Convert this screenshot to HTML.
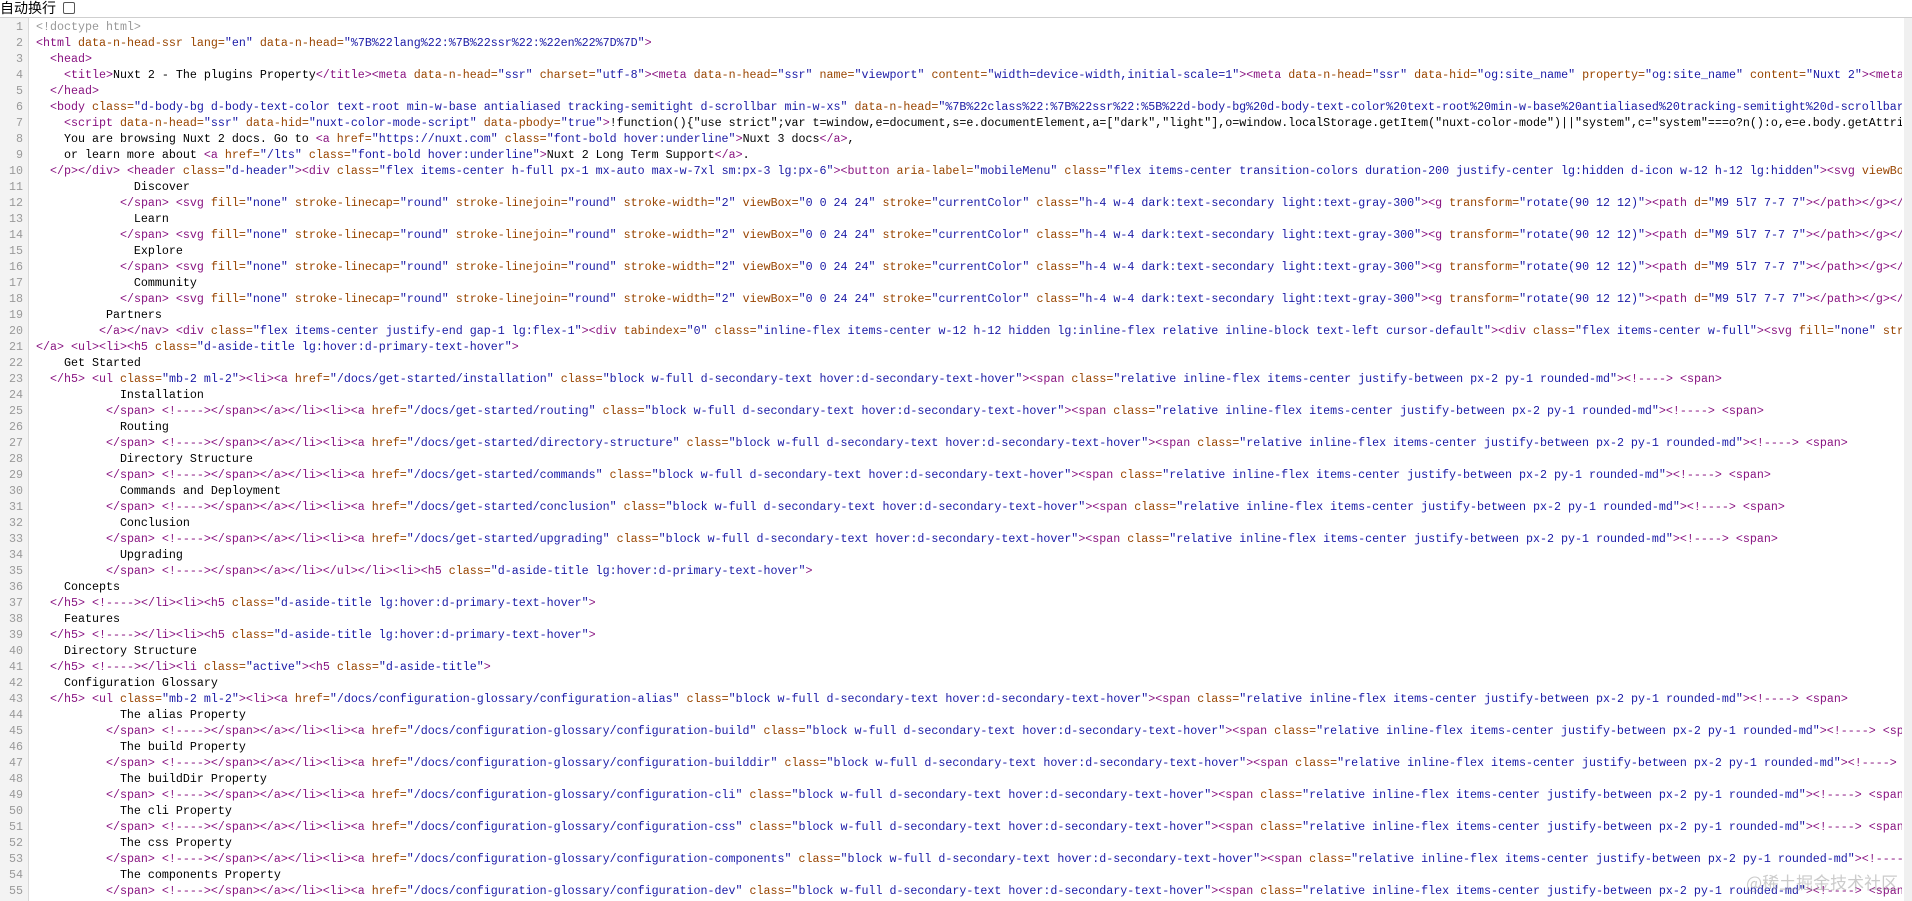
<!DOCTYPE html>
<html><head><meta charset="utf-8"><style>
body{margin:0;width:1912px;height:901px;overflow:hidden;background:#fff;font-family:"Liberation Mono","Noto Sans CJK SC",monospace;}
#bar{height:17px;border-bottom:1px solid #cfcfcf;font:14px/17px "Liberation Sans","Noto Sans CJK SC",sans-serif;color:#000;position:relative;}
#bar i{position:absolute;left:63px;top:2px;width:10px;height:10px;border:1px solid #555;border-radius:2px;background:#fff}
#g{position:absolute;left:0;top:18px;width:28px;height:883px;background:#f3f3f3;border-right:1px solid #d8d8d8}
#c{position:absolute;left:0;top:19px;width:1902px;}
.l{height:16px;line-height:16px;font-size:11.67px;white-space:pre;overflow:hidden;position:relative;padding-left:36px;color:#000}
.l b{font-weight:normal;position:absolute;left:0;width:23px;text-align:right;color:#999}
.t{color:#881280}.a{color:#994500}.v{color:#1a1aa6}.c{color:#999}
#sb{position:absolute;right:0;top:18px;width:8px;height:883px;background:#f0f0f0}
#wm{position:absolute;left:1746px;top:872px;font:17px/20px "Noto Sans CJK SC",sans-serif;color:rgba(160,160,160,0.55);white-space:nowrap}
</style></head><body>
<div id="bar">自动换行<i></i></div>
<div id="g"></div><div id="sb"></div>
<div id="c">
<div class="l"><b>1</b><span class="c">&lt;!doctype html&gt;</span></div>
<div class="l"><b>2</b><span class="t">&lt;html </span><span class="a">data-n-head-ssr lang=</span><span class="v">"en"</span> <span class="a">data-n-head=</span><span class="v">"%7B%22lang%22:%7B%22ssr%22:%22en%22%7D%7D"</span><span class="t">&gt;</span></div>
<div class="l"><b>3</b>  <span class="t">&lt;head&gt;</span></div>
<div class="l"><b>4</b>    <span class="t">&lt;title&gt;</span>Nuxt 2 - The plugins Property<span class="t">&lt;/title&gt;&lt;meta </span><span class="a">data-n-head=</span><span class="v">"ssr"</span> <span class="a">charset=</span><span class="v">"utf-8"</span><span class="t">&gt;&lt;meta </span><span class="a">data-n-head=</span><span class="v">"ssr"</span> <span class="a">name=</span><span class="v">"viewport"</span> <span class="a">content=</span><span class="v">"width=device-width,initial-scale=1"</span><span class="t">&gt;&lt;meta </span><span class="a">data-n-head=</span><span class="v">"ssr"</span> <span class="a">data-hid=</span><span class="v">"og:site_name"</span> <span class="a">property=</span><span class="v">"og:site_name"</span> <span class="a">content=</span><span class="v">"Nuxt 2"</span><span class="t">&gt;&lt;meta</span></div>
<div class="l"><b>5</b>  <span class="t">&lt;/head&gt;</span></div>
<div class="l"><b>6</b>  <span class="t">&lt;body </span><span class="a">class=</span><span class="v">"d-body-bg d-body-text-color text-root min-w-base antialiased tracking-semitight d-scrollbar min-w-xs"</span> <span class="a">data-n-head=</span><span class="v">"%7B%22class%22:%7B%22ssr%22:%5B%22d-body-bg%20d-body-text-color%20text-root%20min-w-base%20antialiased%20tracking-semitight%20d-scrollbar</span></div>
<div class="l"><b>7</b>    <span class="t">&lt;script </span><span class="a">data-n-head=</span><span class="v">"ssr"</span> <span class="a">data-hid=</span><span class="v">"nuxt-color-mode-script"</span> <span class="a">data-pbody=</span><span class="v">"true"</span><span class="t">&gt;</span>!function(){"use strict";var t=window,e=document,s=e.documentElement,a=["dark","light"],o=window.localStorage.getItem("nuxt-color-mode")||"system",c="system"===o?n():o,e=e.body.getAttri</div>
<div class="l"><b>8</b>    You are browsing Nuxt 2 docs. Go to <span class="t">&lt;a </span><span class="a">href=</span><span class="v">"https://nuxt.com"</span> <span class="a">class=</span><span class="v">"font-bold hover:underline"</span><span class="t">&gt;</span>Nuxt 3 docs<span class="t">&lt;/a&gt;</span>,</div>
<div class="l"><b>9</b>    or learn more about <span class="t">&lt;a </span><span class="a">href=</span><span class="v">"/lts"</span> <span class="a">class=</span><span class="v">"font-bold hover:underline"</span><span class="t">&gt;</span>Nuxt 2 Long Term Support<span class="t">&lt;/a&gt;</span>.</div>
<div class="l"><b>10</b>  <span class="t">&lt;/p&gt;&lt;/div&gt;</span> <span class="t">&lt;header </span><span class="a">class=</span><span class="v">"d-header"</span><span class="t">&gt;&lt;div </span><span class="a">class=</span><span class="v">"flex items-center h-full px-1 mx-auto max-w-7xl sm:px-3 lg:px-6"</span><span class="t">&gt;&lt;button </span><span class="a">aria-label=</span><span class="v">"mobileMenu"</span> <span class="a">class=</span><span class="v">"flex items-center transition-colors duration-200 justify-center lg:hidden d-icon w-12 h-12 lg:hidden"</span><span class="t">&gt;&lt;svg </span><span class="a">viewBox</span></div>
<div class="l"><b>11</b>              Discover</div>
<div class="l"><b>12</b>            <span class="t">&lt;/span&gt;</span> <span class="t">&lt;svg </span><span class="a">fill=</span><span class="v">"none"</span> <span class="a">stroke-linecap=</span><span class="v">"round"</span> <span class="a">stroke-linejoin=</span><span class="v">"round"</span> <span class="a">stroke-width=</span><span class="v">"2"</span> <span class="a">viewBox=</span><span class="v">"0 0 24 24"</span> <span class="a">stroke=</span><span class="v">"currentColor"</span> <span class="a">class=</span><span class="v">"h-4 w-4 dark:text-secondary light:text-gray-300"</span><span class="t">&gt;&lt;g </span><span class="a">transform=</span><span class="v">"rotate(90 12 12)"</span><span class="t">&gt;&lt;path </span><span class="a">d=</span><span class="v">"M9 5l7 7-7 7"</span><span class="t">&gt;&lt;/path&gt;&lt;/g&gt;&lt;/</span></div>
<div class="l"><b>13</b>              Learn</div>
<div class="l"><b>14</b>            <span class="t">&lt;/span&gt;</span> <span class="t">&lt;svg </span><span class="a">fill=</span><span class="v">"none"</span> <span class="a">stroke-linecap=</span><span class="v">"round"</span> <span class="a">stroke-linejoin=</span><span class="v">"round"</span> <span class="a">stroke-width=</span><span class="v">"2"</span> <span class="a">viewBox=</span><span class="v">"0 0 24 24"</span> <span class="a">stroke=</span><span class="v">"currentColor"</span> <span class="a">class=</span><span class="v">"h-4 w-4 dark:text-secondary light:text-gray-300"</span><span class="t">&gt;&lt;g </span><span class="a">transform=</span><span class="v">"rotate(90 12 12)"</span><span class="t">&gt;&lt;path </span><span class="a">d=</span><span class="v">"M9 5l7 7-7 7"</span><span class="t">&gt;&lt;/path&gt;&lt;/g&gt;&lt;/</span></div>
<div class="l"><b>15</b>              Explore</div>
<div class="l"><b>16</b>            <span class="t">&lt;/span&gt;</span> <span class="t">&lt;svg </span><span class="a">fill=</span><span class="v">"none"</span> <span class="a">stroke-linecap=</span><span class="v">"round"</span> <span class="a">stroke-linejoin=</span><span class="v">"round"</span> <span class="a">stroke-width=</span><span class="v">"2"</span> <span class="a">viewBox=</span><span class="v">"0 0 24 24"</span> <span class="a">stroke=</span><span class="v">"currentColor"</span> <span class="a">class=</span><span class="v">"h-4 w-4 dark:text-secondary light:text-gray-300"</span><span class="t">&gt;&lt;g </span><span class="a">transform=</span><span class="v">"rotate(90 12 12)"</span><span class="t">&gt;&lt;path </span><span class="a">d=</span><span class="v">"M9 5l7 7-7 7"</span><span class="t">&gt;&lt;/path&gt;&lt;/g&gt;&lt;/</span></div>
<div class="l"><b>17</b>              Community</div>
<div class="l"><b>18</b>            <span class="t">&lt;/span&gt;</span> <span class="t">&lt;svg </span><span class="a">fill=</span><span class="v">"none"</span> <span class="a">stroke-linecap=</span><span class="v">"round"</span> <span class="a">stroke-linejoin=</span><span class="v">"round"</span> <span class="a">stroke-width=</span><span class="v">"2"</span> <span class="a">viewBox=</span><span class="v">"0 0 24 24"</span> <span class="a">stroke=</span><span class="v">"currentColor"</span> <span class="a">class=</span><span class="v">"h-4 w-4 dark:text-secondary light:text-gray-300"</span><span class="t">&gt;&lt;g </span><span class="a">transform=</span><span class="v">"rotate(90 12 12)"</span><span class="t">&gt;&lt;path </span><span class="a">d=</span><span class="v">"M9 5l7 7-7 7"</span><span class="t">&gt;&lt;/path&gt;&lt;/g&gt;&lt;/</span></div>
<div class="l"><b>19</b>          Partners</div>
<div class="l"><b>20</b>         <span class="t">&lt;/a&gt;&lt;/nav&gt;</span> <span class="t">&lt;div </span><span class="a">class=</span><span class="v">"flex items-center justify-end gap-1 lg:flex-1"</span><span class="t">&gt;&lt;div </span><span class="a">tabindex=</span><span class="v">"0"</span> <span class="a">class=</span><span class="v">"inline-flex items-center w-12 h-12 hidden lg:inline-flex relative inline-block text-left cursor-default"</span><span class="t">&gt;&lt;div </span><span class="a">class=</span><span class="v">"flex items-center w-full"</span><span class="t">&gt;&lt;svg </span><span class="a">fill=</span><span class="v">"none"</span> <span class="a">str</span></div>
<div class="l"><b>21</b><span class="t">&lt;/a&gt;</span> <span class="t">&lt;ul&gt;&lt;li&gt;&lt;h5 </span><span class="a">class=</span><span class="v">"d-aside-title lg:hover:d-primary-text-hover"</span><span class="t">&gt;</span></div>
<div class="l"><b>22</b>    Get Started</div>
<div class="l"><b>23</b>  <span class="t">&lt;/h5&gt;</span> <span class="t">&lt;ul </span><span class="a">class=</span><span class="v">"mb-2 ml-2"</span><span class="t">&gt;&lt;li&gt;&lt;a </span><span class="a">href=</span><span class="v">"/docs/get-started/installation"</span> <span class="a">class=</span><span class="v">"block w-full d-secondary-text hover:d-secondary-text-hover"</span><span class="t">&gt;&lt;span </span><span class="a">class=</span><span class="v">"relative inline-flex items-center justify-between px-2 py-1 rounded-md"</span><span class="t">&gt;&lt;!----&gt;</span> <span class="t">&lt;span&gt;</span></div>
<div class="l"><b>24</b>            Installation</div>
<div class="l"><b>25</b>          <span class="t">&lt;/span&gt;</span> <span class="t">&lt;!----&gt;&lt;/span&gt;&lt;/a&gt;&lt;/li&gt;&lt;li&gt;&lt;a </span><span class="a">href=</span><span class="v">"/docs/get-started/routing"</span> <span class="a">class=</span><span class="v">"block w-full d-secondary-text hover:d-secondary-text-hover"</span><span class="t">&gt;&lt;span </span><span class="a">class=</span><span class="v">"relative inline-flex items-center justify-between px-2 py-1 rounded-md"</span><span class="t">&gt;&lt;!----&gt;</span> <span class="t">&lt;span&gt;</span></div>
<div class="l"><b>26</b>            Routing</div>
<div class="l"><b>27</b>          <span class="t">&lt;/span&gt;</span> <span class="t">&lt;!----&gt;&lt;/span&gt;&lt;/a&gt;&lt;/li&gt;&lt;li&gt;&lt;a </span><span class="a">href=</span><span class="v">"/docs/get-started/directory-structure"</span> <span class="a">class=</span><span class="v">"block w-full d-secondary-text hover:d-secondary-text-hover"</span><span class="t">&gt;&lt;span </span><span class="a">class=</span><span class="v">"relative inline-flex items-center justify-between px-2 py-1 rounded-md"</span><span class="t">&gt;&lt;!----&gt;</span> <span class="t">&lt;span&gt;</span></div>
<div class="l"><b>28</b>            Directory Structure</div>
<div class="l"><b>29</b>          <span class="t">&lt;/span&gt;</span> <span class="t">&lt;!----&gt;&lt;/span&gt;&lt;/a&gt;&lt;/li&gt;&lt;li&gt;&lt;a </span><span class="a">href=</span><span class="v">"/docs/get-started/commands"</span> <span class="a">class=</span><span class="v">"block w-full d-secondary-text hover:d-secondary-text-hover"</span><span class="t">&gt;&lt;span </span><span class="a">class=</span><span class="v">"relative inline-flex items-center justify-between px-2 py-1 rounded-md"</span><span class="t">&gt;&lt;!----&gt;</span> <span class="t">&lt;span&gt;</span></div>
<div class="l"><b>30</b>            Commands and Deployment</div>
<div class="l"><b>31</b>          <span class="t">&lt;/span&gt;</span> <span class="t">&lt;!----&gt;&lt;/span&gt;&lt;/a&gt;&lt;/li&gt;&lt;li&gt;&lt;a </span><span class="a">href=</span><span class="v">"/docs/get-started/conclusion"</span> <span class="a">class=</span><span class="v">"block w-full d-secondary-text hover:d-secondary-text-hover"</span><span class="t">&gt;&lt;span </span><span class="a">class=</span><span class="v">"relative inline-flex items-center justify-between px-2 py-1 rounded-md"</span><span class="t">&gt;&lt;!----&gt;</span> <span class="t">&lt;span&gt;</span></div>
<div class="l"><b>32</b>            Conclusion</div>
<div class="l"><b>33</b>          <span class="t">&lt;/span&gt;</span> <span class="t">&lt;!----&gt;&lt;/span&gt;&lt;/a&gt;&lt;/li&gt;&lt;li&gt;&lt;a </span><span class="a">href=</span><span class="v">"/docs/get-started/upgrading"</span> <span class="a">class=</span><span class="v">"block w-full d-secondary-text hover:d-secondary-text-hover"</span><span class="t">&gt;&lt;span </span><span class="a">class=</span><span class="v">"relative inline-flex items-center justify-between px-2 py-1 rounded-md"</span><span class="t">&gt;&lt;!----&gt;</span> <span class="t">&lt;span&gt;</span></div>
<div class="l"><b>34</b>            Upgrading</div>
<div class="l"><b>35</b>          <span class="t">&lt;/span&gt;</span> <span class="t">&lt;!----&gt;&lt;/span&gt;&lt;/a&gt;&lt;/li&gt;&lt;/ul&gt;&lt;/li&gt;&lt;li&gt;&lt;h5 </span><span class="a">class=</span><span class="v">"d-aside-title lg:hover:d-primary-text-hover"</span><span class="t">&gt;</span></div>
<div class="l"><b>36</b>    Concepts</div>
<div class="l"><b>37</b>  <span class="t">&lt;/h5&gt;</span> <span class="t">&lt;!----&gt;&lt;/li&gt;&lt;li&gt;&lt;h5 </span><span class="a">class=</span><span class="v">"d-aside-title lg:hover:d-primary-text-hover"</span><span class="t">&gt;</span></div>
<div class="l"><b>38</b>    Features</div>
<div class="l"><b>39</b>  <span class="t">&lt;/h5&gt;</span> <span class="t">&lt;!----&gt;&lt;/li&gt;&lt;li&gt;&lt;h5 </span><span class="a">class=</span><span class="v">"d-aside-title lg:hover:d-primary-text-hover"</span><span class="t">&gt;</span></div>
<div class="l"><b>40</b>    Directory Structure</div>
<div class="l"><b>41</b>  <span class="t">&lt;/h5&gt;</span> <span class="t">&lt;!----&gt;&lt;/li&gt;&lt;li </span><span class="a">class=</span><span class="v">"active"</span><span class="t">&gt;&lt;h5 </span><span class="a">class=</span><span class="v">"d-aside-title"</span><span class="t">&gt;</span></div>
<div class="l"><b>42</b>    Configuration Glossary</div>
<div class="l"><b>43</b>  <span class="t">&lt;/h5&gt;</span> <span class="t">&lt;ul </span><span class="a">class=</span><span class="v">"mb-2 ml-2"</span><span class="t">&gt;&lt;li&gt;&lt;a </span><span class="a">href=</span><span class="v">"/docs/configuration-glossary/configuration-alias"</span> <span class="a">class=</span><span class="v">"block w-full d-secondary-text hover:d-secondary-text-hover"</span><span class="t">&gt;&lt;span </span><span class="a">class=</span><span class="v">"relative inline-flex items-center justify-between px-2 py-1 rounded-md"</span><span class="t">&gt;&lt;!----&gt;</span> <span class="t">&lt;span&gt;</span></div>
<div class="l"><b>44</b>            The alias Property</div>
<div class="l"><b>45</b>          <span class="t">&lt;/span&gt;</span> <span class="t">&lt;!----&gt;&lt;/span&gt;&lt;/a&gt;&lt;/li&gt;&lt;li&gt;&lt;a </span><span class="a">href=</span><span class="v">"/docs/configuration-glossary/configuration-build"</span> <span class="a">class=</span><span class="v">"block w-full d-secondary-text hover:d-secondary-text-hover"</span><span class="t">&gt;&lt;span </span><span class="a">class=</span><span class="v">"relative inline-flex items-center justify-between px-2 py-1 rounded-md"</span><span class="t">&gt;&lt;!----&gt;</span> <span class="t">&lt;span&gt;</span></div>
<div class="l"><b>46</b>            The build Property</div>
<div class="l"><b>47</b>          <span class="t">&lt;/span&gt;</span> <span class="t">&lt;!----&gt;&lt;/span&gt;&lt;/a&gt;&lt;/li&gt;&lt;li&gt;&lt;a </span><span class="a">href=</span><span class="v">"/docs/configuration-glossary/configuration-builddir"</span> <span class="a">class=</span><span class="v">"block w-full d-secondary-text hover:d-secondary-text-hover"</span><span class="t">&gt;&lt;span </span><span class="a">class=</span><span class="v">"relative inline-flex items-center justify-between px-2 py-1 rounded-md"</span><span class="t">&gt;&lt;!----&gt;</span> <span class="t">&lt;span&gt;</span></div>
<div class="l"><b>48</b>            The buildDir Property</div>
<div class="l"><b>49</b>          <span class="t">&lt;/span&gt;</span> <span class="t">&lt;!----&gt;&lt;/span&gt;&lt;/a&gt;&lt;/li&gt;&lt;li&gt;&lt;a </span><span class="a">href=</span><span class="v">"/docs/configuration-glossary/configuration-cli"</span> <span class="a">class=</span><span class="v">"block w-full d-secondary-text hover:d-secondary-text-hover"</span><span class="t">&gt;&lt;span </span><span class="a">class=</span><span class="v">"relative inline-flex items-center justify-between px-2 py-1 rounded-md"</span><span class="t">&gt;&lt;!----&gt;</span> <span class="t">&lt;span&gt;</span></div>
<div class="l"><b>50</b>            The cli Property</div>
<div class="l"><b>51</b>          <span class="t">&lt;/span&gt;</span> <span class="t">&lt;!----&gt;&lt;/span&gt;&lt;/a&gt;&lt;/li&gt;&lt;li&gt;&lt;a </span><span class="a">href=</span><span class="v">"/docs/configuration-glossary/configuration-css"</span> <span class="a">class=</span><span class="v">"block w-full d-secondary-text hover:d-secondary-text-hover"</span><span class="t">&gt;&lt;span </span><span class="a">class=</span><span class="v">"relative inline-flex items-center justify-between px-2 py-1 rounded-md"</span><span class="t">&gt;&lt;!----&gt;</span> <span class="t">&lt;span&gt;</span></div>
<div class="l"><b>52</b>            The css Property</div>
<div class="l"><b>53</b>          <span class="t">&lt;/span&gt;</span> <span class="t">&lt;!----&gt;&lt;/span&gt;&lt;/a&gt;&lt;/li&gt;&lt;li&gt;&lt;a </span><span class="a">href=</span><span class="v">"/docs/configuration-glossary/configuration-components"</span> <span class="a">class=</span><span class="v">"block w-full d-secondary-text hover:d-secondary-text-hover"</span><span class="t">&gt;&lt;span </span><span class="a">class=</span><span class="v">"relative inline-flex items-center justify-between px-2 py-1 rounded-md"</span><span class="t">&gt;&lt;!----&gt;</span> <span class="t">&lt;span&gt;</span></div>
<div class="l"><b>54</b>            The components Property</div>
<div class="l"><b>55</b>          <span class="t">&lt;/span&gt;</span> <span class="t">&lt;!----&gt;&lt;/span&gt;&lt;/a&gt;&lt;/li&gt;&lt;li&gt;&lt;a </span><span class="a">href=</span><span class="v">"/docs/configuration-glossary/configuration-dev"</span> <span class="a">class=</span><span class="v">"block w-full d-secondary-text hover:d-secondary-text-hover"</span><span class="t">&gt;&lt;span </span><span class="a">class=</span><span class="v">"relative inline-flex items-center justify-between px-2 py-1 rounded-md"</span><span class="t">&gt;&lt;!----&gt;</span> <span class="t">&lt;span&gt;</span></div>
</div>
<div id="wm">@稀土掘金技术社区</div>
</body></html>
